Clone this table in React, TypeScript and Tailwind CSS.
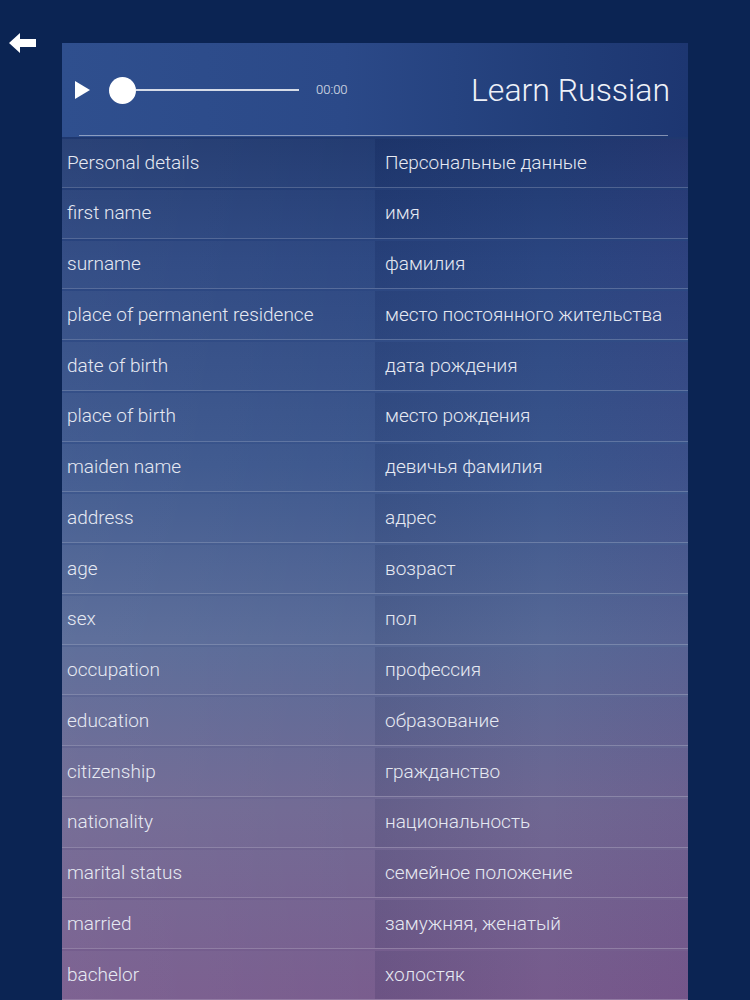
const rows: [string, string][] = [
  ["Personal details", "Персональные данные"],
  ["first name", "имя"],
  ["surname", "фамилия"],
  ["place of permanent residence", "место постоянного жительства"],
  ["date of birth", "дата рождения"],
  ["place of birth", "место рождения"],
  ["maiden name", "девичья фамилия"],
  ["address", "адрес"],
  ["age", "возраст"],
  ["sex", "пол"],
  ["occupation", "профессия"],
  ["education", "образование"],
  ["citizenship", "гражданство"],
  ["nationality", "национальность"],
  ["marital status", "семейное положение"],
  ["married", "замужняя, женатый"],
  ["bachelor", "холостяк"],
]

export default function App() {
  return (
    <div className="flex h-[1000px] w-[750px] overflow-hidden bg-[#0b2453] font-['Roboto','Liberation_Sans',sans-serif] text-[#e6e9f2]">
      {/* back button */}
      <div className="w-[62px] shrink-0 pl-[9px] pt-[33px]">
        <svg width="28" height="20" viewBox="0 0 28 20">
          <path d="M0 10 L11 0 L11 6 L27 6 L27 14 L11 14 L11 20 Z" fill="#ffffff" />
        </svg>
      </div>

      {/* main panel */}
      <div className="mt-[43px] flex w-[626px] shrink-0 flex-col">
        <div className="flex h-[94px] shrink-0 flex-col bg-[linear-gradient(90deg,#2f4f8e_0%,#2b4988_45%,#213d78_80%,#1d3671_100%)]">
          <div className="flex flex-1 items-center pl-[13px] pr-[18px] pt-[2px]">
            <svg width="16" height="18" viewBox="0 0 16 18" className="mr-[18px]">
              <path d="M0 0 L15 9 L0 18 Z" fill="#ffffff" />
            </svg>
            <div className="flex w-[190px] items-center">
              <div className="h-[27px] w-[27px] shrink-0 rounded-full bg-white" />
              <div className="h-[2px] flex-1 bg-white/80" />
            </div>
            <span className="ml-[17px] text-[13px] font-light text-white/85">00:00</span>
            <span className="ml-auto text-[32px] font-light text-[#eef1f8]">Learn Russian</span>
          </div>
          <div className="ml-[17px] mr-[20px] h-[1px] bg-white/45" />
          <div className="h-[1px]" />
        </div>

        <div className="flex flex-1 flex-col bg-[linear-gradient(180deg,#1f386f_0%,#2a4580_14%,#3a558c_38%,#566896_58%,#6f6792_78%,#775a8c_100%)]">
          {rows.map(([en, ru], i) => (
            <div
              key={i}
              className="flex h-[50.75px] shrink-0 border-b border-white/20 pt-[2px] text-[19px] font-light"
            >
              <div className="flex w-[313px] items-center bg-[linear-gradient(90deg,rgba(255,255,255,0.05),rgba(255,255,255,0.02))] pl-[5px]">{en}</div>
              <div className="flex flex-1 items-center bg-[linear-gradient(90deg,rgba(10,20,60,0.1),rgba(10,20,60,0.0)_55%,rgba(90,30,110,0.08))] pl-[10px]">{ru}</div>
            </div>
          ))}
        </div>
      </div>
    </div>
  )
}
